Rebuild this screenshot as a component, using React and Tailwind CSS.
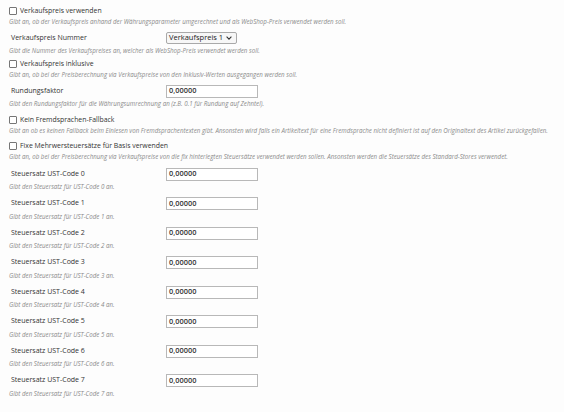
import React from 'react';

const font = { fontFamily: '"Open Sans", "Noto Sans", sans-serif' };

function CheckRow({ label, desc, className = '' }) {
  return (
    <div className={className}>
      <label className="flex h-[12px] items-center whitespace-nowrap text-[6.9px] text-[#333]">
        <span className="mr-[3px] inline-block h-[8px] w-[8px] shrink-0 rounded-[1px] border border-[#767676] bg-white"></span>
        {label}
      </label>
      <div className="h-[9px] whitespace-nowrap text-[6.2px] italic leading-[9px] text-[#8a8a8a]">{desc}</div>
    </div>
  );
}

function InputRow({ label, desc, value, className = '', children }) {
  return (
    <div className={className}>
      <div className="grid h-[14px] grid-cols-[157px_auto] items-center">
        <span className="whitespace-nowrap pl-[2px] text-[7px] text-[#333]">{label}</span>
        {children || (
          <div className="flex h-[13px] w-[92px] items-center border border-[#b8b8b8] bg-white pl-[2px] text-[7.4px] font-semibold text-[#333]">
            {value}
          </div>
        )}
      </div>
      <div className="h-[12px] whitespace-nowrap text-[6.2px] italic leading-[12px] text-[#8a8a8a]">{desc}</div>
    </div>
  );
}

export default function App() {
  const codes = [0, 1, 2, 3, 4, 5, 6, 7];
  return (
    <div style={font} className="h-[412px] w-[564px] overflow-hidden bg-[#fdfdfd] pl-[9px] pt-[5px]">
      <CheckRow
        label="Verkaufspreis verwenden"
        desc="Gibt an, ob der Verkaufspreis anhand der Währungsparameter umgerechnet und als WebShop-Preis verwendet werden soll."
      />
      <InputRow
        className="mt-[5px]"
        label="Verkaufspreis Nummer"
        desc="Gibt die Nummer des Verkaufspreises an, welcher als WebShop-Preis verwendet werden soll."
      >
        <div className="flex h-[12px] w-[71px] items-center justify-between whitespace-nowrap rounded-[2px] border border-[#a9a9a9] bg-[#f7f7f7] pl-[2px] pr-[4px] text-[7.5px] leading-none text-[#222]">
          <span>Verkaufspreis 1</span>
          <svg width="6" height="4" viewBox="0 0 6 4" fill="none" stroke="#333" strokeWidth="1.1">
            <path d="M0.6 0.7 L3 3.1 L5.4 0.7" />
          </svg>
        </div>
      </InputRow>
      <CheckRow
        className="mt-[1px]"
        label="Verkaufspreis inklusive"
        desc="Gibt an, ob bei der Preisberechnung via Verkaufspreise von den Inklusiv-Werten ausgegangen werden soll."
      />
      <InputRow
        className="mt-[5px]"
        label="Rundungsfaktor"
        value="0,00000"
        desc="Gibt den Rundungsfaktor für die Währungsumrechnung an (z.B. 0.1 für Rundung auf Zehntel)."
      />
      <CheckRow
        className="mt-[4px]"
        label="Kein Fremdsprachen-Fallback"
        desc="Gibt an ob es keinen Fallback beim Einlesen von Fremdsprachentexten gibt. Ansonsten wird falls ein Artikeltext für eine Fremdsprache nicht definiert ist auf den Originaltext des Artikel zurückgefallen."
      />
      <CheckRow
        className="mt-[5px]"
        label="Fixe Mehrwersteuersätze für Basis verwenden"
        desc="Gibt an, ob bei der Preisberechnung via Verkaufspreise von die fix hinterlegten Steuersätze verwendet werden sollen. Ansonsten werden die Steuersätze des Standard-Stores verwendet."
      />
      <div className="mt-[6px] flex flex-col gap-[3.5px]">
        {codes.map((c) => (
          <InputRow
            key={c}
            label={`Steuersatz UST-Code ${c}`}
            value="0,00000"
            desc={`Gibt den Steuersatz für UST-Code ${c} an.`}
          />
        ))}
      </div>
    </div>
  );
}
